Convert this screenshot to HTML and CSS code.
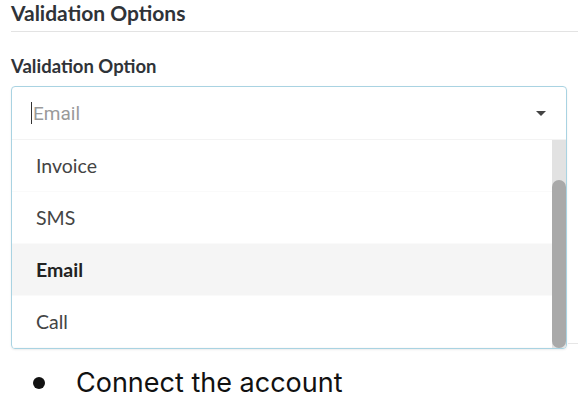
FILE: index.html
```
<!DOCTYPE html>
<html>
<head>
<meta charset="utf-8">
<link rel="stylesheet" href="styles.css">
</head>
<body>
<div class="page">
  <div class="section-title">Validation Options</div>
  <div class="field">
    <div class="label">Validation Option</div>
    <div class="select">
      <div class="control">
        <span class="caret"></span><span class="placeholder">Email</span>
        <span class="arrow"></span>
      </div>
      <div class="menu">
        <div class="options">
          <div class="option">Invoice</div>
          <div class="option">SMS</div>
          <div class="option selected">Email</div>
          <div class="option">Call</div>
        </div>
        <div class="scrollbar"><div class="thumb"></div></div>
      </div>
    </div>
    <div class="side-line"></div>
  </div>
  <ul class="steps">
    <li>Connect the account</li>
  </ul>
</div>
</body>
</html>
```
FILE: styles.css
```
html, body { margin: 0; padding: 0; background: #fff; }
.page { padding: 0 0 0 11px; font-family: Lato, "Liberation Sans", sans-serif; }
.section-title {
  font-weight: 700; font-size: 21px; color: #2f3338; line-height: 26px;
  padding-bottom: 5px; border-bottom: 1px solid #e3e3e3;
}
.field { position: relative; margin-top: 22px; }
.label { font-weight: 700; font-size: 18.5px; color: #2f3338; line-height: 24px; margin-bottom: 8px; }
.select {
  width: 554px; border: 1px solid #a9d3e2; border-radius: 4px; overflow: hidden;
  box-shadow: 0 1px 2px rgba(0,0,0,0.08);
}
.control {
  height: 52px; display: flex; align-items: center; padding-left: 19px; padding-right: 20px;
  border-bottom: 1px solid #f3f3f3;
}
.caret { width: 1px; height: 22px; background: #333; margin-right: 1px; }
.placeholder { font-family: Roboto, sans-serif; font-size: 19px; color: #9a9a9a; flex: 1; }
.arrow { width: 0; height: 0; border-left: 5px solid transparent; border-right: 5px solid transparent; border-top: 5px solid #444; }
.menu { display: flex; height: 208px; }
.options { flex: 1; }
.option {
  height: 52px; display: flex; align-items: center; padding-left: 24px;
  font-size: 19.5px; color: #444; border-bottom: 1px solid #fafafa; box-sizing: border-box;
}
.option.selected { background: #f5f5f5; font-weight: 700; color: #222; }
.scrollbar { width: 14px; background: #e2e2e2; position: relative; }
.thumb { position: absolute; left: 0; right: 0; top: 40px; bottom: 0; background: #a9a9a9; border-radius: 7px; }
.side-line { position: absolute; left: 557px; right: 0; bottom: 5px; border-bottom: 1px solid #e6e6e6; }
.steps { margin: 18px 0 0 0; padding: 0 0 0 22px; list-style: none; font-family: Inter, "Open Sans", sans-serif; font-size: 27px; line-height: 32px; color: #111; }
.steps li { display: flex; align-items: center; }
.steps li::before { content: ""; width: 12px; height: 12px; border-radius: 50%; background: #111; margin-right: 31px; }
```
